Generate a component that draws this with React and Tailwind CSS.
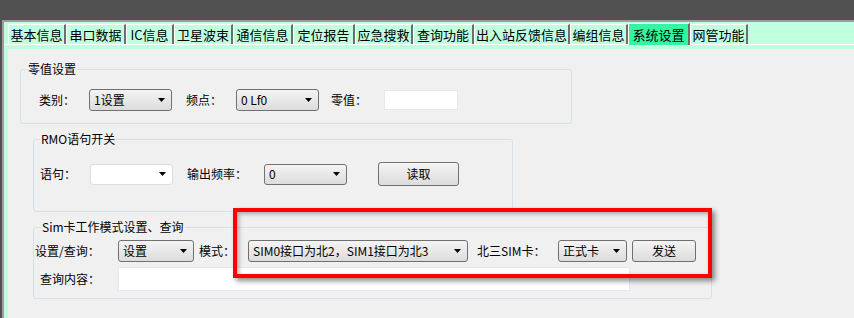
import React from "react";

const tabs = [
  ["基本信息", 58],
  ["串口数据", 60],
  ["IC信息", 48],
  ["卫星波束", 59],
  ["通信信息", 60],
  ["定位报告", 62],
  ["应急搜救", 58],
  ["查询功能", 61],
  ["出入站反馈信息", 96],
  ["编组信息", 58],
  ["系统设置", 62],
  ["网管功能", 58],
];

function Arrow() {
  return (
    <svg width="7" height="4" viewBox="0 0 7 4" className="absolute right-[6px] top-1/2 -translate-y-1/2">
      <path d="M0 0h7L3.5 4z" fill="#000" />
    </svg>
  );
}

function Select({ w, h = "h-[22px]", text, white }) {
  return (
    <div
      className={`relative flex items-center ${w} ${h} rounded-[3px] pl-[4px] text-[12px] leading-none whitespace-nowrap ${
        white
          ? "bg-white border border-[#dcdcdc]"
          : "border border-[#707070] bg-linear-to-b from-[#f4f4f4] to-[#dcdcdc]"
      }`}
    >
      {text}
      <Arrow />
    </div>
  );
}

function Button({ w, h, text }) {
  return (
    <div
      className={`flex items-center justify-center ${w} ${h} rounded-[3px] border border-[#707070] bg-linear-to-b from-[#f4f4f4] to-[#dcdcdc] text-[12px] leading-none`}
    >
      {text}
    </div>
  );
}

function Label({ w, children }) {
  return <div className={`${w} text-[12px] leading-none whitespace-nowrap`}>{children}</div>;
}

export default function App() {
  return (
    <div className="relative w-[854px] h-[318px] overflow-hidden bg-[#515151] text-black font-['Noto_Sans_CJK_SC',sans-serif]">
      <div className="h-[20px]" />
      <div className="ml-[2px] h-[298px] border-t-2 border-l-2 border-[#9c9c9c] bg-[#c0ffe0] flex flex-col">
        <div className="flex items-end h-[23px] pl-[4px] border-b border-white">
          {tabs.map(([t, w]) => {
            const sel = t === "系统设置";
            return (
              <div
                key={t}
                style={{ width: w }}
                className={`flex items-center justify-center border-t border-l border-white border-r-2 border-r-[#6e6e6e] text-[13px] leading-none whitespace-nowrap ${
                  sel ? "h-[22px] bg-[#35f5a0] -mb-px" : "h-[20px] bg-[#c0ffe0]"
                }`}
              >
                {t}
              </div>
            );
          })}
        </div>
        <div className="h-[4px]" />
        <div className="ml-[4px] flex-1 bg-[#f0f0f0] flex flex-col items-start">
          {/* 零值设置 */}
          <fieldset className="ml-[12px] mt-[13px] w-[552px] h-[62px] border border-[#d5dfe5] rounded-[3px]">
            <legend className="ml-[6px] px-[1px] text-[12px] leading-[14px]">零值设置</legend>
            <div className="flex items-center mt-[13px] pl-[18px] h-[22px]">
              <Label w="w-[50px]">类别：</Label>
              <Select w="w-[83px]" text="1设置" />
              <div className="ml-[14px]">
                <Label w="w-[50px]">频点：</Label>
              </div>
              <Select w="w-[83px]" text="0 Lf0" />
              <div className="ml-[12px]">
                <Label w="w-[53px]">零值：</Label>
              </div>
              <div className="w-[74px] h-[20px] bg-white border border-[#e3e9ef]" />
            </div>
          </fieldset>

          {/* RMO语句开关 */}
          <fieldset className="ml-[25px] mt-[8px] w-[480px] h-[80px] border border-[#d5dfe5] rounded-[3px]">
            <legend className="ml-[6px] px-[1px] text-[12px] leading-[14px]">RMO语句开关</legend>
            <div className="flex items-center mt-[16px] pl-[6px] h-[24px]">
              <Label w="w-[50px]">语句：</Label>
              <Select w="w-[83px]" h="h-[21px]" text="" white />
              <div className="ml-[14px]">
                <Label w="w-[77px]">输出频率：</Label>
              </div>
              <Select w="w-[83px]" h="h-[21px]" text="0" />
              <div className="ml-[31px]">
                <Button w="w-[81px]" h="h-[24px]" text="读取" />
              </div>
            </div>
          </fieldset>

          {/* Sim卡工作模式设置、查询 */}
          <fieldset className="ml-[25px] mt-[8px] w-[679px] h-[79px] border border-[#d5dfe5] rounded-[3px]">
            <legend className="ml-[7px] px-[1px] text-[12px] leading-[14px]">Sim卡工作模式设置、查询</legend>
            <div className="flex items-center mt-[6px] pl-[1px] h-[22px]">
              <Label w="w-[83px]">设置/查询：</Label>
              <Select w="w-[76px]" text="设置" />
              <div className="ml-[5px]">
                <Label w="w-[49px]">模式：</Label>
              </div>
              <Select w="w-[220px]" text="SIM0接口为北2，SIM1接口为北3" />
              <div className="ml-[9px]">
                <Label w="w-[81px]">北三SIM卡：</Label>
              </div>
              <Select w="w-[69px]" text="正式卡" />
              <div className="ml-[5px]">
                <Button w="w-[64px]" h="h-[22px]" text="发送" />
              </div>
            </div>
            <div className="flex items-center mt-[5px] pl-[6px] h-[24px]">
              <Label w="w-[78px]">查询内容：</Label>
              <div className="w-[512px] h-[24px] bg-white border border-[#e3e9ef]" />
            </div>
          </fieldset>
        </div>
      </div>

      {/* red highlight rectangle */}
      <div className="absolute left-[233px] top-[208px] w-[479px] h-[70px] border-4 border-[#ff0000] shadow-[3px_3px_5px_rgba(0,0,0,0.45),inset_2px_2px_4px_rgba(0,0,0,0.3)]" />
    </div>
  );
}
